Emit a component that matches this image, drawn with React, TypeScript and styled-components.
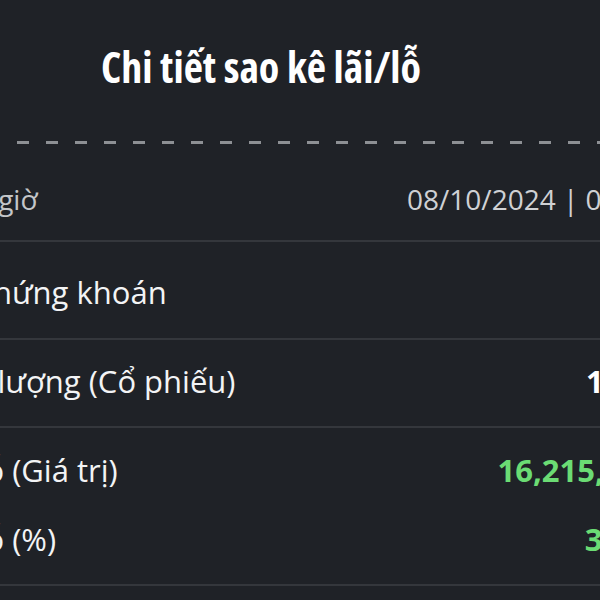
import styled, { createGlobalStyle } from 'styled-components';

const GlobalStyle = createGlobalStyle`
  body {
    margin: 0;
    background: #1f2227;
    overflow: hidden;
  }
`;

type Tone = 'muted' | 'plain' | 'profit';

type RowData = {
  label: string;
  value: string;
  tone: Tone;
  top: number;
  bottom: number;
  divider?: boolean;
};

const rows: RowData[] = [
  { label: 'Ngày giờ', value: '08/10/2024 | 09:15', tone: 'muted', top: 35, bottom: 21, divider: true },
  { label: 'Mã chứng khoán', value: 'SSI', tone: 'plain', top: 30, bottom: 26, divider: true },
  { label: 'Khối lượng (Cổ phiếu)', value: '1000', tone: 'plain', top: 21, bottom: 25, divider: true },
  { label: 'Lãi/lỗ (Giá trị)', value: '16,215,000', tone: 'profit', top: 22, bottom: 0 },
  { label: 'Lãi/lỗ (%)', value: '3.2%', tone: 'profit', top: 29, bottom: 25, divider: true },
];

export default function App() {
  return (
    <Sheet>
      <GlobalStyle />
      <Header>
        <Title>Chi tiết sao kê lãi/lỗ</Title>
      </Header>
      <Dashed />
      {rows.map((r) => (
        <Row key={r.label} $top={r.top} $bottom={r.bottom} $divider={r.divider}>
          <Label $tone={r.tone}>{r.label}</Label>
          <Value $tone={r.tone}>{r.value}</Value>
        </Row>
      ))}
    </Sheet>
  );
}

const Sheet = styled.div`
  width: 782px;
  margin-left: -100px;
  font-family: 'Open Sans', 'Noto Sans', sans-serif;
  color: #f3f4f5;
`;

const Header = styled.div`
  display: flex;
  justify-content: center;
  padding: 39px 60px 46px 0;
`;

const Title = styled.h1`
  margin: 0;
  font-size: 42px;
  line-height: 56px;
  font-weight: 700;
  font-stretch: condensed;
  color: #ffffff;
`;

const Dashed = styled.div`
  height: 3px;
  background: repeating-linear-gradient(
    to right,
    #8d9094 0 12px,
    transparent 12px 29px
  );
  background-position: 1px 0;
`;

const Row = styled.div<{ $top: number; $bottom: number; $divider?: boolean }>`
  display: flex;
  justify-content: space-between;
  align-items: baseline;
  margin: 0 25px;
  padding: ${(p) => p.$top}px 0 ${(p) => p.$bottom}px;
  border-bottom: ${(p) => (p.$divider ? '2px solid #34373c' : 'none')};
  font-size: 31px;
  line-height: 40px;
  white-space: nowrap;
`;

const Label = styled.span<{ $tone: Tone }>`
  font-size: ${(p) => (p.$tone === 'muted' ? '28px' : '31px')};
  color: ${(p) => (p.$tone === 'muted' ? '#c4c6c9' : '#f3f4f5')};
`;

const Value = styled.span<{ $tone: Tone }>`
  font-size: ${(p) => (p.$tone === 'muted' ? '28px' : '31px')};
  font-weight: ${(p) => (p.$tone === 'muted' ? 400 : 700)};
  color: ${(p) =>
    p.$tone === 'profit' ? '#6bdc74' : p.$tone === 'muted' ? '#cfd1d4' : '#ffffff'};
`;
